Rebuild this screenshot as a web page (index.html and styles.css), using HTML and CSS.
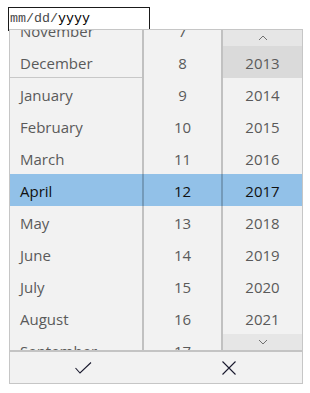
FILE: index.html
```html
<!DOCTYPE html>
<html>
<head>
<meta charset="utf-8">
<link rel="stylesheet" href="styles.css">
</head>
<body>
<div class="field">
  <div class="date-input"><span class="seg">mm/dd/</span><span class="seg active">yyyy</span></div>
  <div class="picker">
    <div class="wheels">
      <div class="band"></div>
      <div class="col col-month">
        <ul class="list">
          <li class="row">November</li>
          <li class="row year-end">December</li>
          <li class="row">January</li>
          <li class="row">February</li>
          <li class="row">March</li>
          <li class="row sel">April</li>
          <li class="row">May</li>
          <li class="row">June</li>
          <li class="row">July</li>
          <li class="row">August</li>
          <li class="row">September</li>
        </ul>
      </div>
      <div class="col col-day">
        <ul class="list">
          <li class="row">7</li>
          <li class="row">8</li>
          <li class="row">9</li>
          <li class="row">10</li>
          <li class="row">11</li>
          <li class="row sel">12</li>
          <li class="row">13</li>
          <li class="row">14</li>
          <li class="row">15</li>
          <li class="row">16</li>
          <li class="row">17</li>
        </ul>
      </div>
      <div class="col col-year">
        <ul class="list">
          <li class="row">2012</li>
          <li class="row hover">2013</li>
          <li class="row">2014</li>
          <li class="row">2015</li>
          <li class="row">2016</li>
          <li class="row sel">2017</li>
          <li class="row">2018</li>
          <li class="row">2019</li>
          <li class="row">2020</li>
          <li class="row">2021</li>
          <li class="row">2022</li>
        </ul>
        <div class="arrow arrow-up"><svg width="10" height="6" viewBox="0 0 10 6"><polyline points="1,5 5,1 9,5" fill="none" stroke="#707070" stroke-width="1"/></svg></div>
        <div class="arrow arrow-down"><svg width="10" height="6" viewBox="0 0 10 6"><polyline points="1,1 5,5 9,1" fill="none" stroke="#707070" stroke-width="1"/></svg></div>
      </div>
    </div>
    <div class="actions">
      <button class="act" aria-label="Done"><svg width="17" height="12" viewBox="0 0 17 12"><polyline points="0.5,6 5,11 16,0.5" fill="none" stroke="#1a1a2e" stroke-width="1.1"/></svg></button>
      <button class="act" aria-label="Cancel"><svg width="14" height="14" viewBox="0 0 14 14"><path d="M0.5 0.5 L13.5 13.5 M13.5 0.5 L0.5 13.5" fill="none" stroke="#1a1a2e" stroke-width="1.1"/></svg></button>
    </div>
  </div>
</div>
</body>
</html>
```

FILE: styles.css
```css
html, body {
  margin: 0;
  padding: 0;
  background: #ffffff;
}

body {
  padding: 7px 8px;
}

.field {
  width: 295px;
}

.date-input {
  box-sizing: border-box;
  width: 142px;
  height: 24px;
  border: 1px solid #1a1a1a;
  padding: 2px 0 0 1px;
  font-family: "Liberation Mono", monospace;
  font-size: 13.33px;
  line-height: 18px;
  color: #4a4a4a;
  background: #fff;
  white-space: nowrap;
}

.date-input .active {
  color: #000;
}

.picker {
  position: relative;
  z-index: 2;
  margin: -2px 0 0 1px;
  box-sizing: border-box;
  width: 294px;
  border: 1px solid #c6c6c6;
  background: #f2f2f2;
  font-family: "Open Sans", "Noto Sans", sans-serif;
  font-size: 15px;
}

.wheels {
  position: relative;
  display: flex;
  height: 320px;
  overflow: hidden;
  border-bottom: 2px solid #c4c4c4;
}

.band {
  position: absolute;
  left: 0;
  right: 0;
  top: 144px;
  height: 32px;
  background: #92c1e8;
}

.col {
  position: relative;
  overflow: hidden;
  height: 320px;
}

.col-month {
  width: 132px;
  border-right: 2px solid rgba(0, 0, 0, 0.2);
}

.col-day {
  width: 77px;
  border-right: 2px solid rgba(0, 0, 0, 0.2);
}

.col-year {
  flex: 1;
}

.list {
  list-style: none;
  margin: -16px 0 0 0;
  padding: 0;
}

.row {
  height: 32px;
  padding-top: 3px;
  line-height: 29px;
  color: #5a5a5a;
  text-align: center;
  box-sizing: border-box;
}

.col-month .row {
  text-align: left;
  padding-left: 10px;
}

.row.year-end {
  border-bottom: 1px solid #c8c8c8;
  line-height: 28px;
}

.row.sel {
  color: #111;
}

.row.hover {
  background: #dadada;
}

.arrow {
  position: absolute;
  left: 0;
  right: 0;
  height: 16px;
  background: #e6e6e6;
  display: flex;
  align-items: center;
  justify-content: center;
}

.arrow-up {
  top: 0;
}

.arrow-down {
  bottom: 0;
}

.actions {
  display: flex;
  height: 31px;
}

.act {
  flex: 1;
  border: 0;
  padding: 0;
  margin: 0;
  background: transparent;
  display: flex;
  align-items: center;
  justify-content: center;
}
```
